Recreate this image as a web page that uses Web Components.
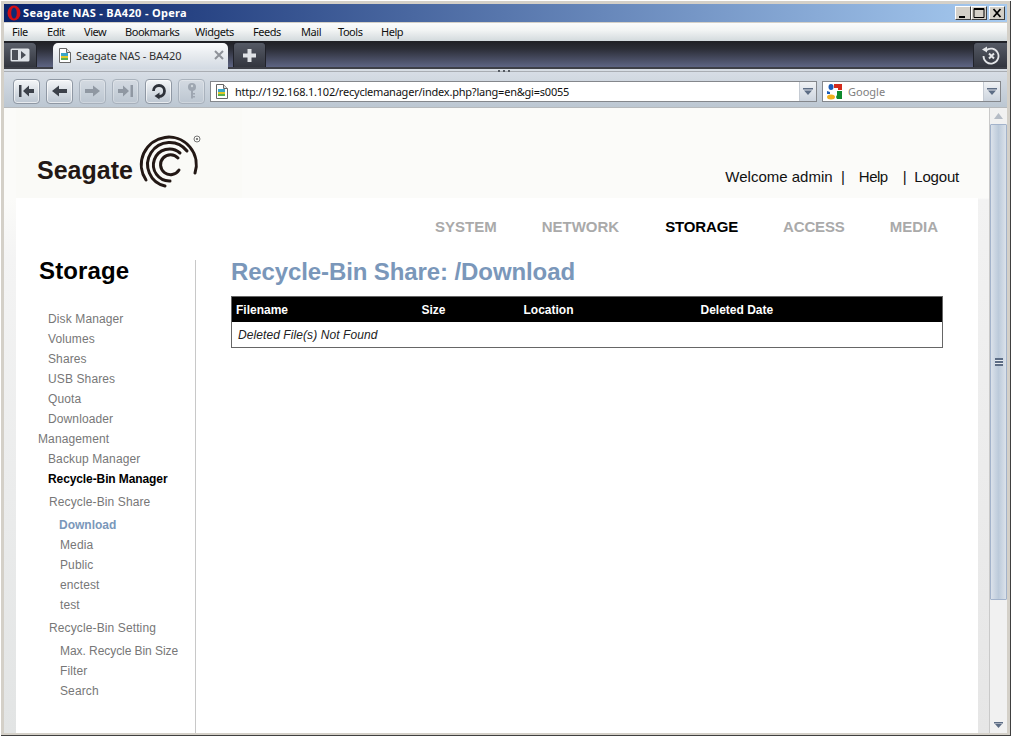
<!DOCTYPE html>
<html><head><meta charset="utf-8"><style>
html,body{margin:0;padding:0;height:100%;overflow:hidden;background:#d4d0c8}
</style></head><body>
<opera-window></opera-window>
<template id="t-win"><style>
:host{display:flex;flex-direction:column;width:1011px;height:736px;box-sizing:border-box;padding:4px 4px 3px 4px;background:#d4d0c8;font:11px "Noto Sans",sans-serif;position:relative;box-shadow:inset 0 1px 0 #fff,inset 1px 0 0 #fff,inset 0 -1px 0 #404040,inset -1px 0 0 #404040}
</style><title-bar></title-bar><menu-bar></menu-bar><tab-strip></tab-strip><nav-bar></nav-bar><page-view></page-view></template>

<template id="t-title"><style>
:host{display:flex;align-items:center;height:18px;flex:none;background:linear-gradient(90deg,#0a246a,#a6caf0);color:#fff;font:bold 11px "Noto Sans",sans-serif;padding:0 2px 0 3px;gap:2px}
.t{flex:1;letter-spacing:.32px;position:relative;top:-1px}
.b{width:16px;height:14px;box-sizing:border-box;background:#d4d0c8;border:1px solid;border-color:#fff #404040 #404040 #fff;display:block}
.w{display:flex}.w .b:last-child{margin-left:2px}
svg{display:block}
</style><svg width="14" height="16" viewBox="0 0 14 16"><ellipse cx="7" cy="8" rx="6.500" ry="7.500" fill="#d40f14"/><ellipse cx="7" cy="8" rx="2.800" ry="5.500" fill="#0f2a74"/></svg><span class="t">Seagate NAS - BA420 - Opera</span>
<span class="w"><svg class="b" viewBox="0 0 14 12"><rect x="3" y="9" width="6" height="2"/></svg><svg class="b" viewBox="0 0 14 12"><path d="M2 1.500h10v9H2z" fill="none" stroke="#000"/><rect x="2" y="1" width="10" height="2"/></svg><svg class="b" viewBox="0 0 14 12"><path d="M3.500 2l7 8M10.500 2l-7 8" stroke="#000" stroke-width="1.800"/></svg></span></template>

<template id="t-menu"><style>
:host{display:flex;flex:none;height:18px;align-items:center;background:linear-gradient(#fbfcfc,#f2f4f4 40%,#d3dadd);color:#111;font:11px "Noto Sans",sans-serif;padding:0 0 2px 8px;box-sizing:border-box;margin-top:1px;letter-spacing:-.45px}
span{flex:none;white-space:nowrap}
</style><span style="width:35px">File</span><span style="width:37px">Edit</span><span style="width:41px">View</span><span style="width:70px">Bookmarks</span><span style="width:58px">Widgets</span><span style="width:48px">Feeds</span><span style="width:37px">Mail</span><span style="width:43px">Tools</span><span>Help</span></template>

<template id="t-tabs"><style>
:host{display:flex;flex:none;height:28px;box-sizing:border-box;background:linear-gradient(#1f2024,#2b2d36 30%,#5d6483);border-bottom:2px solid #3d3f47;align-items:flex-end;position:relative;color:#222;font:11px "Noto Sans",sans-serif}
.sq{width:33px;height:25px;box-sizing:border-box;background:linear-gradient(#5a5f6a,#33363f);border-radius:0 5px 0 0;border:1px solid #20222a;border-left:0;border-bottom:0;display:flex;align-items:center;justify-content:center}
.tab{margin-left:16px;width:175px;height:26px;margin-bottom:-2px;box-sizing:border-box;background:linear-gradient(#fbfcfd,#e6eaee 50%,#d3dae3);border-radius:5px 5px 0 0;display:flex;align-items:center;padding:0 4px 2px 6px;gap:5px}
.tab span{flex:1;color:#303030;letter-spacing:-.15px}
.plus{margin-left:5px;width:33px;height:25px;box-sizing:border-box;background:linear-gradient(#555a65,#33363f);border-radius:4px 4px 0 0;border:1px solid #20222a;border-bottom:0;display:flex;align-items:center;justify-content:center}
.sp{flex:1}
.undo{width:34px;height:25px;box-sizing:border-box;background:linear-gradient(#555a65,#33363f);border-radius:4px 0 0 0;border:1px solid #20222a;border-right:0;border-bottom:0;display:flex;align-items:center;justify-content:center}
.grip{position:absolute;left:494px;bottom:-6px;z-index:1}
svg{display:block}
</style>
<div class="sq"><svg width="20" height="14" viewBox="0 0 20 14"><rect x="0.500" y="0.500" width="19" height="13" rx="1.500" fill="#dfe3e8"/><rect x="2" y="2" width="6" height="10" fill="#4b4f58"/><path d="M11 3l5 4-5 4z" fill="#4b4f58"/></svg></div>
<div class="tab"><doc-icon></doc-icon><span>Seagate NAS - BA420</span><svg width="10" height="10" viewBox="0 0 10 10"><path d="M1 1l8 8M9 1l-8 8" stroke="#8e9299" stroke-width="2"/></svg></div>
<div class="plus"><svg width="13" height="13" viewBox="0 0 13 13"><path d="M4.500 0h4v4.500h4.500v4h-4.500v4.500h-4v-4.500h-4.500v-4h4.500z" fill="#dfe2e6"/></svg></div>
<div class="sp"></div>
<div class="undo"><svg width="20" height="20" viewBox="0 0 20 20"><path d="M5 5.500a7.500 7.500 0 1 1-2.500 5.500" fill="none" stroke="#e3e5e8" stroke-width="1.800"/><path d="M1 4.500l5-3v6z" fill="#e3e5e8"/><path d="M8 8.500l5 5M13 8.500l-5 5" stroke="#e3e5e8" stroke-width="2"/></svg></div>
<svg class="grip" width="13" height="3" viewBox="0 0 13 3"><path d="M0 0h2v2H0zM5 0h2v2H5zM10 0h2v2h-2z" fill="#555a62"/></svg></template>

<template id="t-doc"><style>
:host{display:block;width:12px;height:15px;flex:none}svg{display:block}
</style><svg width="12" height="15" viewBox="0 0 12 15"><path d="M.5.500h7l4 4v10h-11z" fill="#fff" stroke="#666"/><path d="M7.500.500v4h4" fill="#ddd" stroke="#666"/><rect x="2" y="5" width="7" height="3" fill="#3aa6c8"/><rect x="2" y="8" width="7" height="2" fill="#e0c828"/><rect x="2" y="10" width="7" height="2" fill="#5ab050"/></svg></template>

<template id="t-nav"><style>
:host{display:flex;flex:none;height:39px;box-sizing:border-box;background:linear-gradient(#d8dee6,#bcc7d2);border-top:2px solid #d7dde4;border-bottom:1px solid #b6b9bc;align-items:center;padding:4px 1px 0 9px;box-shadow:inset 0 1px 0 #a9adb3;font:11px "Noto Sans",sans-serif;color:#000}
.btn{width:27px;height:25px;flex:none;box-sizing:border-box;margin-right:6px;border:1px solid #8f98a4;border-radius:4px;background:linear-gradient(#f4f6f8,#bcc6d1);display:flex;align-items:center;justify-content:center;box-shadow:inset 0 0 0 1px #ffffffa0}
.off{border-color:#a6afba;background:linear-gradient(#d5dbe2,#bcc6d1);opacity:.9;box-shadow:inset 0 0 0 1px #ffffff50}
.btn.last{margin-right:5px}
.addr{width:607px;height:21px;flex:none;box-sizing:border-box;border:1px solid #84878c;background:#fff;display:flex;align-items:center;padding-left:5px;gap:7px}
.addr span{flex:1;white-space:nowrap;color:#111;letter-spacing:-.22px}
.drop{width:16px;align-self:stretch;background:linear-gradient(#f0f2f5,#ccd4de);border-left:1px solid #c5cbd3;display:flex;align-items:center;justify-content:center}
.search{margin-left:5px;width:179px;height:21px;flex:none;box-sizing:border-box;border:1px solid #84878c;background:#fff;display:flex;align-items:center;padding-left:3px;gap:5px;color:#808080}
.search span{flex:1}
svg{display:block}
</style>
<div class="btn"><svg width="17" height="14" viewBox="0 0 17 14"><rect x="1" y="1" width="2.500" height="12" fill="#3c414a"/><path d="M5 7l6-5.500v3.500h5v4h-5v3.500z" fill="#3c414a"/></svg></div>
<div class="btn"><svg width="17" height="14" viewBox="0 0 17 14"><path d="M1 7l7-5.500v3.500h8v4h-8v3.500z" fill="#3c414a"/></svg></div>
<div class="btn off"><svg width="17" height="14" viewBox="0 0 17 14"><path d="M16 7l-7-5.500v3.500h-8v4h8v3.500z" fill="#8a929d"/></svg></div>
<div class="btn off"><svg width="17" height="14" viewBox="0 0 17 14"><rect x="13.500" y="1" width="2.500" height="12" fill="#8a929d"/><path d="M12 7l-6-5.500v3.500h-5v4h5v3.500z" fill="#8a929d"/></svg></div>
<div class="btn"><svg width="17" height="17" viewBox="0 0 17 17"><path d="M3.500 8a5.500 5.500 0 1 1 5.500 5.500" fill="none" stroke="#2e323a" stroke-width="2.800"/><path d="M9.500 9.500v7l-5-3.500z" fill="#2e323a"/></svg></div>
<div class="btn off last"><svg width="12" height="18" viewBox="0 0 12 18"><circle cx="6" cy="5" r="4" fill="#9aa2ad"/><circle cx="6" cy="4" r="1.200" fill="#cfd5dc"/><path d="M5 8h2v8l-1 1-1-1z M7 11h2v1.500H7z M7 14h2v1.500H7z" fill="#9aa2ad"/></svg></div>
<div class="addr"><doc-icon></doc-icon><span>http://192.168.1.102/recyclemanager/index.php?lang=en&amp;gi=s0055</span><div class="drop"><svg width="10" height="7" viewBox="0 0 10 7"><path d="M0 0h10v1.500H0zM1 2.500h8L5 7z" fill="#5d6d85"/></svg></div></div>
<div class="search"><svg width="17" height="17" viewBox="0 0 17 17"><path d="M8 1h8v6h-4V5H8z" fill="#d42a1c"/><path d="M11 8h5v8h-5l-1-2 1-2z" fill="#0e8a2e"/><ellipse cx="5" cy="4" rx="2.500" ry="3" fill="#1b5cb8"/><path d="M1 8l3 1v2H1z" fill="#1b5cb8"/><ellipse cx="5" cy="14" rx="4" ry="2.500" fill="#f0b020"/></svg><span>Google</span><div class="drop"><svg width="10" height="7" viewBox="0 0 10 7"><path d="M0 0h10v1.500H0zM1 2.500h8L5 7z" fill="#5d6d85"/></svg></div></div></template>

<template id="t-page"><style>
:host{flex:1;display:flex;min-height:0;background:#fff}
.doc{flex:1;min-width:0;display:grid;grid-template-columns:12px 962px 11px;overflow:hidden}
.main{background:#fff;display:flex;flex-direction:column;min-height:0}
.left{background:linear-gradient(#fbfbf9,#fbfbf9 90px,#f4f4f4 150px,#e2e4e4)}
.right{background:linear-gradient(#fbfbf9,#fbfbf9 90px,#f2f2f2 92px,#e6e6e6)}
</style>
<div class="doc"><div class="left"></div><div class="main"><site-head></site-head><top-nav></top-nav><site-body></site-body></div><div class="right"></div></div><scroll-rail></scroll-rail></template>

<template id="t-head"><style>
:host{display:flex;height:90px;flex:none;background:#fbfbf9;box-sizing:border-box;font:15px "Liberation Sans",sans-serif;color:#111}
.logo{width:226px;display:flex;align-items:flex-start;padding:22px 0 0 21px;box-sizing:border-box;background:#fafaf7}
.word{font:bold 25px/30px "Liberation Sans",sans-serif;color:#231815;margin-top:25px;margin-right:2px}
.links{flex:1;display:flex;justify-content:flex-end;align-items:flex-end;padding:0 19px 13px 0}
.links span{white-space:nowrap}
svg{display:block;overflow:visible;flex:none}
</style>
<div class="logo"><span class="word">Seagate</span><svg width="68" height="62" viewBox="135 130 68 62"><g fill="none" stroke="#231815" stroke-width="3" stroke-linecap="round"><path d="M195 173A27.500 27.500 0 1 0 146 180"/><path d="M187 151A22 22 0 1 0 165 186"/><path d="M180 153A16 16 0 1 0 170 181"/><path d="M178 158A10 10 0 1 0 179 170"/></g><circle cx="197" cy="139" r="3" fill="none" stroke="#666" stroke-width=".9"/><circle cx="197" cy="139" r="1.100" fill="#666"/></svg></div>
<div class="links"><span>Welcome admin&nbsp; |</span><span style="margin-left:14px;letter-spacing:-.5px">Help</span><span style="margin-left:15px;letter-spacing:-.2px">|&nbsp; Logout</span></div></template>

<template id="t-top"><style>
:host{display:flex;flex:none;height:62px;box-sizing:border-box;justify-content:flex-end;padding:20px 40px 0 0;font:bold 15px/18px "Liberation Sans",sans-serif;color:#aaa;gap:45px}
.on{color:#000;letter-spacing:-.15px}
.ac{letter-spacing:-.15px}
.ne{margin-right:1px}
</style><span>SYSTEM</span><span class="ne">NETWORK</span><span class="on">STORAGE</span><span class="ac">ACCESS</span><span>MEDIA</span></template>

<template id="t-body"><style>
:host{flex:1;display:flex;min-height:0}
</style><side-nav></side-nav><main-area></main-area></template>

<template id="t-side"><style>
:host{display:block;flex:none;width:180px;box-sizing:border-box;border-right:1px solid #c8c8c8;font:12px/20px "Liberation Sans",sans-serif;color:#777;letter-spacing:.12px}
h2{margin:0 0 26px;font:bold 24px/22px "Liberation Sans",sans-serif;color:#000;padding:0 0 1px 23px}
ul{list-style:none;margin:0;padding:0}
.l1{padding-left:32px}
.m{padding-left:22px}
.cur{color:#000;font-weight:bold;padding-left:32px;letter-spacing:-.1px}
.l2{padding-left:33px;margin:3px 0}
.l3{padding-left:44px}
.act{color:#7a97ba;font-weight:bold;padding-left:43px;letter-spacing:0}
.tight{letter-spacing:-.06px}
</style><h2>Storage</h2><ul>
<li class="l1">Disk Manager</li><li class="l1">Volumes</li><li class="l1">Shares</li><li class="l1">USB Shares</li><li class="l1">Quota</li><li class="l1">Downloader</li><li class="m">Management</li><li class="l1">Backup Manager</li><li class="cur">Recycle-Bin Manager</li>
<li class="l2">Recycle-Bin Share</li><li class="act">Download</li><li class="l3">Media</li><li class="l3">Public</li><li class="l3">enctest</li><li class="l3">test</li>
<li class="l2">Recycle-Bin Setting</li><li class="l3 tight">Max. Recycle Bin Size</li><li class="l3">Filter</li><li class="l3">Search</li></ul></template>

<template id="t-main"><style>
:host{flex:1;display:block;padding-left:35px;padding-right:35px;font:12px "Liberation Sans",sans-serif;color:#000}
h1{margin:0 0 12px;font:bold 24px/24px "Liberation Sans",sans-serif;color:#7a97ba;letter-spacing:-.1px}
table{width:712px;border-collapse:collapse;border:1px solid #666;table-layout:fixed}
th{background:#000;color:#fff;text-align:left;font:bold 12px/23px "Liberation Sans",sans-serif;padding:2px 0 0 4px}
td{font:italic 12px/23px "Liberation Sans",sans-serif;padding:2px 0 0 6px;color:#222;letter-spacing:.08px}
</style><h1>Recycle-Bin Share: /Download</h1>
<table><colgroup><col style="width:186px"><col style="width:102px"><col style="width:177px"><col></colgroup><tr><th>Filename</th><th>Size</th><th>Location</th><th>Deleted Date</th></tr><tr><td colspan="4">Deleted File(s) Not Found</td></tr></table></template>

<template id="t-rail"><style>
:host{display:flex;flex-direction:column;flex:none;width:18px;box-sizing:border-box;background:#f1f1f1;border-left:1px solid #c9c9c9}
.a{height:16px;display:flex;align-items:center;justify-content:center;flex:none}
.th{height:476px;box-sizing:border-box;flex:none;border:1px solid #a3b3cb;border-radius:1px;background:linear-gradient(90deg,#dbe2ea,#bccada 50%,#dbe2ea);display:flex;align-items:center;justify-content:center}
.sp{flex:1}
i{display:block;width:8px;height:8px;background:repeating-linear-gradient(#5d6d85 0 2px,#e8ecf0 2px 3px)}
</style><div class="a"><svg width="9" height="6" viewBox="0 0 9 6"><path d="M4.500 0L9 6H0z" fill="#b5bcc6"/></svg></div><div class="th"><i></i></div><div class="sp"></div><div class="a"><svg width="9" height="6" viewBox="0 0 9 6"><path d="M0 0h9v1.500H0zM1 2h7L4.500 6z" fill="#5d6d85"/></svg></div></template>

<script>
const map={'opera-window':'t-win','title-bar':'t-title','menu-bar':'t-menu','tab-strip':'t-tabs','doc-icon':'t-doc','nav-bar':'t-nav','page-view':'t-page','site-head':'t-head','top-nav':'t-top','site-body':'t-body','side-nav':'t-side','main-area':'t-main','scroll-rail':'t-rail'};
for(const [n,id] of Object.entries(map)){
 customElements.define(n,class extends HTMLElement{constructor(){super();this.attachShadow({mode:'open'}).appendChild(document.getElementById(id).content.cloneNode(true));}});
}
</script>
</body></html>
